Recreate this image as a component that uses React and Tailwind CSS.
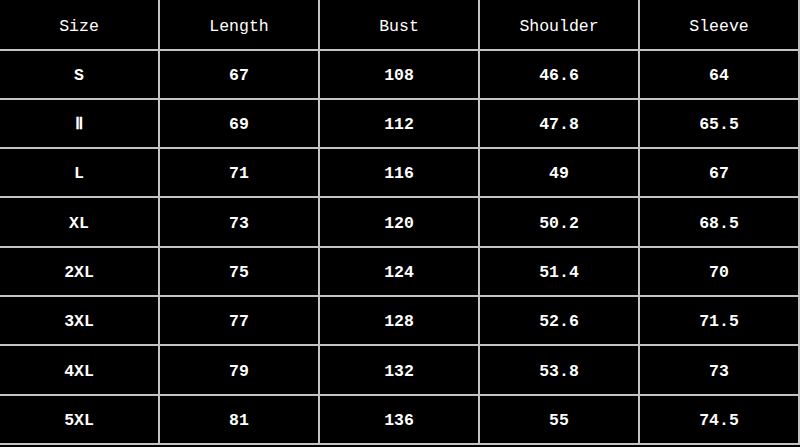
export default function App() {
  const header = ["Size", "Length", "Bust", "Shoulder", "Sleeve"];
  const rows = [
    ["S", "67", "108", "46.6", "64"],
    ["Ⅱ", "69", "112", "47.8", "65.5"],
    ["L", "71", "116", "49", "67"],
    ["XL", "73", "120", "50.2", "68.5"],
    ["2XL", "75", "124", "51.4", "70"],
    ["3XL", "77", "128", "52.6", "71.5"],
    ["4XL", "79", "132", "53.8", "73"],
    ["5XL", "81", "136", "55", "74.5"],
  ];
  return (
    <div
      className="w-[800px] h-[447px] bg-black overflow-hidden text-white"
      style={{ fontFamily: '"Liberation Mono", "DejaVu Sans Mono", monospace' }}
    >
      <div className="grid grid-cols-5 grid-rows-[50.5px_repeat(8,49.3px)] w-[800px]">
        {header.map((h) => (
          <div
            key={h}
            className="flex items-center justify-center border-r-2 border-b-2 border-[#c4c4c4] text-[16.5px] pt-[6px]"
          >
            {h}
          </div>
        ))}
        {rows.map((r, ri) =>
          r.map((c, ci) => (
            <div
              key={ri + "-" + ci}
              className="flex items-center justify-center border-r-2 border-b-2 border-[#c4c4c4] text-[16.5px] font-bold pt-[4px]"
            >
              {c}
            </div>
          ))
        )}
      </div>
    </div>
  );
}
